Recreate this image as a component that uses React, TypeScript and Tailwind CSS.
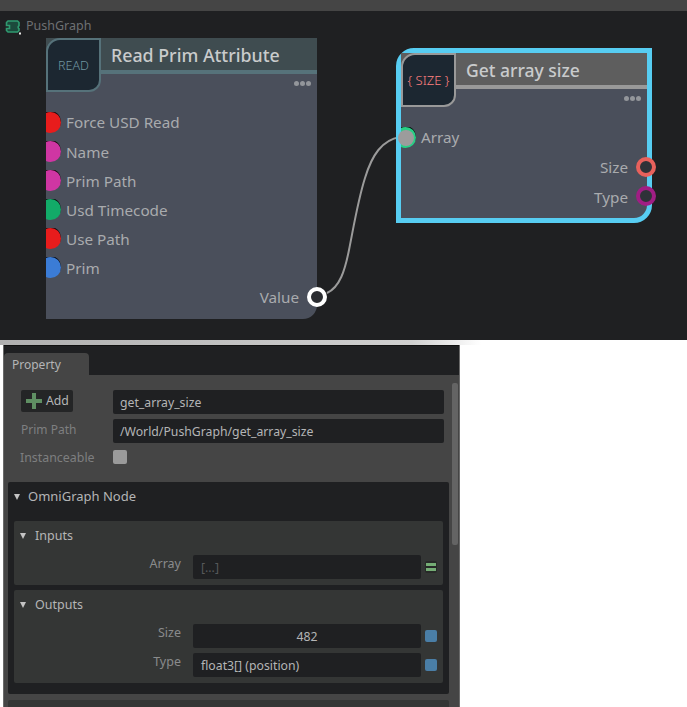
const font = "font-['Noto_Sans',sans-serif]";

function InputRow({ label, color, edge, first }: { label: string; color: string; edge: string; first?: boolean }) {
  return (
    <div className={`relative pl-[20px] text-[15.25px] leading-[29px] text-[#a9abae] ${first ? "h-[30px]" : "h-[29px]"}`}>
      <div className={`absolute left-0 h-[21px] w-[15px] overflow-hidden ${first ? "top-[4px]" : "top-[3px]"}`}>
        <div className="absolute left-[-6px] top-[-1px] h-[21px] w-[21px] rounded-full" style={{ backgroundColor: edge }} />
        <div className="absolute left-[-6px] top-0 h-[21px] w-[21px] rounded-full" style={{ backgroundColor: color }} />
      </div>
      {label}
    </div>
  );
}

function Dots() {
  return (
    <div className="absolute right-[6px] top-[43px] flex gap-[1px]">
      <span className="h-[5px] w-[5px] rounded-full bg-[#93969b]" />
      <span className="h-[5px] w-[5px] rounded-full bg-[#93969b]" />
      <span className="h-[5px] w-[5px] rounded-full bg-[#93969b]" />
    </div>
  );
}

function ReadNode() {
  return (
    <div className="absolute left-[46px] top-[38px] h-[281px] w-[271px] rounded-br-[14px] bg-[#4a4f5b]">
      <div className="absolute left-0 top-0 h-[36px] w-full border-b-[4px] border-[#56727a] bg-[#3f4c50] pl-[65px] text-[17.8px] font-medium leading-[35px] text-[#c9cbcc]">
        Read Prim Attribute
      </div>
      <div className="absolute left-0 top-0 flex h-[54px] w-[55px] items-center justify-center rounded-tl-[14px] rounded-br-[12px] border-[2px] border-[#56727a] bg-[#1c2731] pt-[3px] text-[12.5px] font-light text-[#7196a0]">
        READ
      </div>
      <Dots />
      <div className="absolute left-0 top-[70px] w-full">
        <InputRow first label="Force USD Read" color="#e81c1c" edge="#16090d" />
        <InputRow label="Name" color="#cf36a3" edge="#16090d" />
        <InputRow label="Prim Path" color="#cf36a3" edge="#16090d" />
        <InputRow label="Usd Timecode" color="#12ab68" edge="#07120d" />
        <InputRow label="Use Path" color="#e81c1c" edge="#16090d" />
        <InputRow label="Prim" color="#3b7cd6" edge="#080d18" />
      </div>
      <div className="absolute right-[18px] top-[248px] text-[15.25px] leading-[22px] text-[#a9abae]">Value</div>
      <div className="absolute left-[261px] top-[249px] h-[20px] w-[20px] rounded-full border-[4px] border-white bg-[#2a2c30]" />
    </div>
  );
}

function SizeNode() {
  return (
    <div className="absolute left-[396px] top-[48px] h-[175px] w-[256px] rounded-tl-[18px] rounded-br-[18px] border-[5px] border-[#57cdf2] bg-[#4a4f5b]">
      <div className="absolute left-0 top-0 h-[36px] w-full border-b-[4px] border-[#999999] bg-[#5e5e5e] pl-[65px] text-[17.5px] font-medium leading-[35px] text-[#c9cbcc]">
        Get array size
      </div>
      <div className="absolute left-0 top-0 flex h-[54px] w-[55px] items-center justify-center rounded-tl-[14px] rounded-br-[12px] border-[2px] border-[#999999] bg-[#1c2731] pt-[2px] text-[13px] font-light text-[#ff8080]">
        {"{ SIZE }"}
      </div>
      <Dots />
      <div className="absolute left-0 top-[74px] h-[21px] w-[15px] overflow-hidden">
        <div className="absolute left-[-6px] top-[-1px] h-[21px] w-[21px] rounded-full bg-[#07120d]" />
        <div className="absolute left-[-6px] top-0 h-[21px] w-[21px] rounded-full bg-[#28cf86]" />
      </div>
      <div className="absolute left-[-3px] top-[77px] h-[16px] w-[16px] rounded-full bg-[#9c9c9c]" />
      <div className="absolute left-[20px] top-[73px] text-[15.25px] leading-[22px] text-[#a9abae]">Array</div>
      <div className="absolute right-[19px] top-[103px] text-[15.25px] leading-[22px] text-[#a9abae]">Size</div>
      <div className="absolute right-[19px] top-[133px] text-[15.25px] leading-[22px] text-[#a9abae]">Type</div>
      <div className="absolute left-[235px] top-[104px] h-[20px] w-[20px] rounded-full border-[4px] border-[#e8615c] bg-[#2f3238]" />
      <div className="absolute left-[235px] top-[133px] h-[20px] w-[20px] rounded-full border-[4px] border-[#a01e84] bg-[#2f3238]" />
    </div>
  );
}

function Graph() {
  return (
    <div className="relative h-[340px] overflow-hidden bg-[#1f2022]">
      <div className="h-[11px] bg-[#454545]" />
      <svg className="absolute left-[5px] top-[19px] h-[16px] w-[17px]" viewBox="0 0 17 16" fill="none">
        <path d="M3 2h9.5l1.5 1.5v3.2a1.8 1.8 0 0 0 0 3.1v1.7L12.5 13H3l-1.5-1.5V9.5h3v-3h-3v-3z" stroke="#2f9a70" strokeWidth="1.6" fill="#1c4a3c" />
        <rect x="14" y="13.5" width="2" height="2" fill="#e6e6e6" />
      </svg>
      <div className="absolute left-[26px] top-[17px] text-[12.5px] leading-[18px] text-[#6e7073]">PushGraph</div>
      <svg className="absolute left-0 top-0 h-[340px] w-[687px]" viewBox="0 0 687 340" fill="none">
        <path d="M327 293 C340 287 345 270 349 250 C354 225 358 200 365 178 C372 155 382 140 400 137" stroke="#9b9b9b" strokeWidth="2" />
      </svg>
      <ReadNode />
      <SizeNode />
    </div>
  );
}

function Field({ children, dim, center, tight }: { children?: string; dim?: boolean; center?: boolean; tight?: boolean }) {
  return (
    <div className={`h-[24px] flex-1 rounded-[2px] bg-[#1f2022] text-[12.25px] ${tight ? "px-[7px] leading-[26px]" : "px-[8px] leading-[25px]"} ${dim ? "text-[#56585a]" : "text-[#b4b5b6]"} ${center ? "text-center" : ""}`}>
      {children}
    </div>
  );
}

function Caret() {
  return <span className="h-0 w-0 border-x-[3.5px] border-t-[6px] border-x-transparent border-t-[#c4c4c4]" />;
}

function SubRow({ label, value, center }: { label: string; value: string; center?: boolean }) {
  return (
    <div className="flex h-[29px] items-center pr-[6px]">
      <div className="mb-[4px] w-[179px] pr-[12px] text-right text-[12.5px] text-[#8a8b8c]">{label}</div>
      <Field center={center}>{value}</Field>
      <div className="ml-[4px] h-[12px] w-[12px] rounded-[2px] bg-[#4a7ea6]" />
    </div>
  );
}

function Panel() {
  return (
    <div className="ml-[3px] flex h-[362px] w-[457px] flex-col overflow-hidden border-l border-r border-[#6a6a6a] bg-[#454545]">
      <div className="flex h-[30px] shrink-0 items-end border-t border-[#111] bg-[#1f2022] pt-[4px]">
        <div className="h-[22px] w-[85px] rounded-t-[4px] bg-[#454545] pl-[8px] text-[12px] leading-[23px] text-[#b4b5b6]">Property</div>
      </div>
      <div className="relative min-h-0 flex-1 pl-[4px] pr-[10px]">
        {/* scrollbar */}
        <div className="absolute right-[1px] top-[8px] h-[162px] w-[6px] rounded-[2px] bg-[#646464]" />

        <div className="flex pl-[13px] pr-[5px] pt-[15px]">
          <div className="flex h-[22px] w-[52px] items-center gap-[4px] rounded-[2px] bg-[#242526] pl-[5px] text-[12.25px] leading-[24px] text-[#b4b5b6]">
            <svg className="h-[16px] w-[16px] shrink-0" viewBox="0 0 16 16">
              <path d="M6 0h4v6h6v4h-6v6H6v-6H0V6h6z" fill="#5f8f63" />
            </svg>
            Add
          </div>
          <div className="ml-[40px] flex flex-1">
            <Field tight>get_array_size</Field>
          </div>
        </div>
        <div className="flex pl-[13px] pr-[5px] pt-[5px]">
          <div className="w-[92px] text-[12px] leading-[21px] text-[#7e7f80]">Prim Path</div>
          <Field tight>/World/PushGraph/get_array_size</Field>
        </div>
        <div className="flex h-[26px] items-center pl-[12px] pt-[1px]">
          <div className="w-[93px] pt-[3px] text-[12.4px] text-[#7e7f80]">Instanceable</div>
          <div className="h-[14px] w-[14px] rounded-[2px] bg-[#9a9a9a]" />
        </div>

        <div className="mt-[13px] h-[212px] rounded-[2px] bg-[#1f2022] px-[6px]">
          <div className="mb-[11px] flex h-[28px] items-center gap-[8px] pt-[2px] text-[13px] text-[#b4b5b6]">
            <Caret />
            OmniGraph Node
          </div>
          <div className="h-[64px] rounded-[2px] bg-[#343635]">
            <div className="mb-[3px] flex h-[28px] items-center gap-[9px] pl-[6px] pt-[2px] text-[12.5px] text-[#b4b5b6]">
              <Caret />
              Inputs
            </div>
            <div className="flex h-[29px] items-center pr-[6px]">
              <div className="mb-[4px] w-[179px] pr-[12px] text-right text-[12.5px] text-[#8a8b8c]">Array</div>
              <Field dim>[...]</Field>
              <div className="ml-[4px] flex h-[12px] w-[12px] flex-col justify-center gap-[2px] rounded-[2px] bg-[#272a28] px-[1px]">
                <span className="h-[3px] bg-[#75ad75]" />
                <span className="h-[3px] bg-[#75ad75]" />
              </div>
            </div>
          </div>
          <div className="mt-[5px] h-[93px] rounded-[2px] bg-[#343635]">
            <div className="mb-[3px] flex h-[28px] items-center gap-[9px] pl-[6px] pt-[2px] text-[12.5px] text-[#b4b5b6]">
              <Caret />
              Outputs
            </div>
            <SubRow label="Size" value="482" center />
            <SubRow label="Type" value="float3[] (position)" />
          </div>
        </div>
        <div className="mt-[6px] h-[30px] rounded-[2px] bg-[#343635]" />
      </div>
    </div>
  );
}

export default function App() {
  return (
    <div className={`h-[707px] w-[687px] overflow-hidden bg-white ${font}`}>
      <Graph />
      <div className="h-[5px] bg-linear-to-r from-[#b0b0b0] via-[#d0d0d0] via-60% to-white to-70%" />
      <Panel />
    </div>
  );
}
